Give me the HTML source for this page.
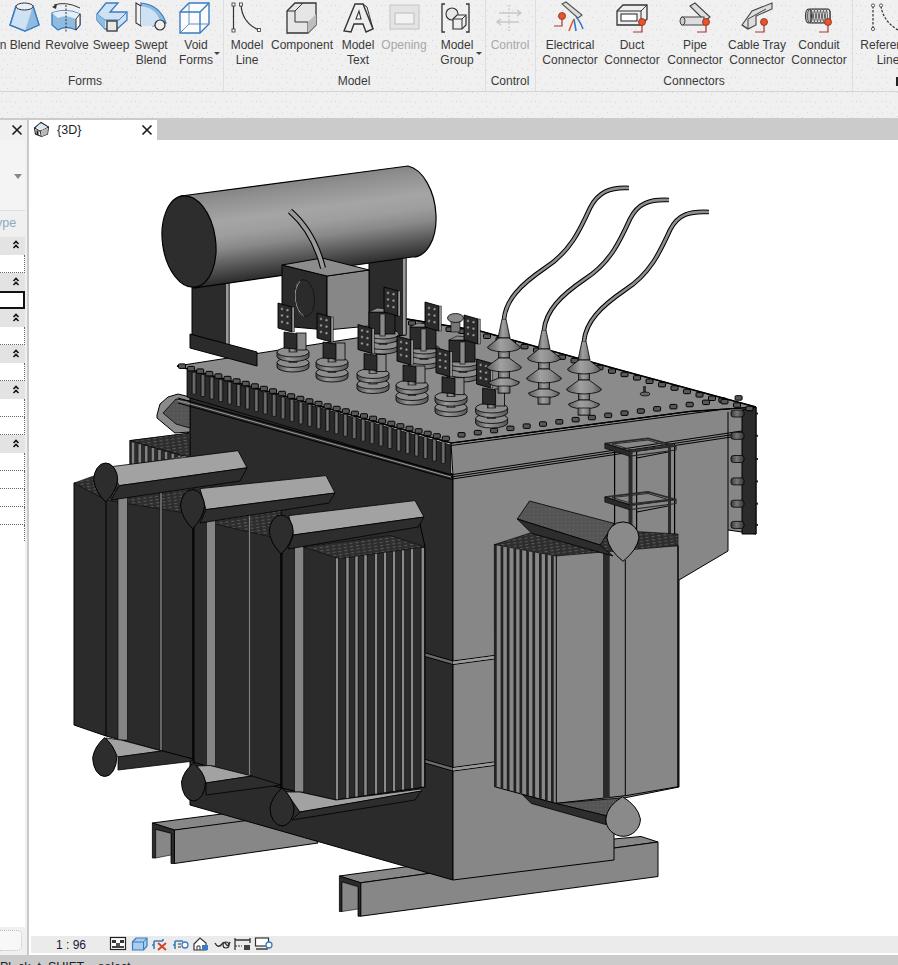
<!DOCTYPE html>
<html><head><meta charset="utf-8">
<style>
*{margin:0;padding:0;box-sizing:border-box}
html,body{width:898px;height:965px;overflow:hidden;background:#fff;font-family:"Liberation Sans",sans-serif}
.abs{position:absolute}
#ribbon{position:absolute;left:0;top:0;width:898px;height:118px;background:#f0f0f0}
.rl{position:absolute;font-size:12px;color:#3a3a3a;text-align:center;line-height:15px;white-space:nowrap;transform:translateX(-50%)}
.gr{color:#a8a8a8}
.sep{position:absolute;top:0;width:1px;height:91px;background:#dedede}
.pl{position:absolute;top:74px;font-size:12px;color:#3a3a3a;white-space:nowrap;transform:translateX(-50%);line-height:15px}
.hdr{position:absolute;left:0;width:25px;height:18px;background:#e3e3e3}
.row{position:absolute;left:0;width:25px;height:18px;background:#fff;border-right:1px dotted #666;border-bottom:1px dotted #666}
</style></head><body>
<div id="ribbon">
<svg class="abs" style="left:0;top:0" width="898" height="118"><defs><pattern id="rdots" width="25" height="24" patternUnits="userSpaceOnUse"><rect x="1" y="5" width="1" height="1" fill="#d6d6d6"/><rect x="6" y="5" width="1" height="1" fill="#d6d6d6"/><rect x="10" y="5" width="1" height="1" fill="#d6d6d6"/><rect x="15" y="6" width="1" height="1" fill="#d6d6d6"/><rect x="3" y="11" width="1" height="1" fill="#d6d6d6"/><rect x="12" y="10" width="1" height="1" fill="#d6d6d6"/><rect x="20" y="12" width="1" height="1" fill="#d6d6d6"/><rect x="7" y="16" width="1" height="1" fill="#d6d6d6"/><rect x="17" y="17" width="1" height="1" fill="#d6d6d6"/><rect x="2" y="21" width="1" height="1" fill="#d6d6d6"/><rect x="11" y="22" width="1" height="1" fill="#d6d6d6"/><rect x="22" y="20" width="1" height="1" fill="#d6d6d6"/></pattern></defs><rect width="898" height="118" fill="url(#rdots)"/></svg>
  <div class="abs" style="left:0;top:91px;width:898px;height:1px;background:#d4d4d4"></div>
  <div class="sep" style="left:223px"></div>
  <div class="sep" style="left:485px"></div>
  <div class="sep" style="left:535px"></div>
  <div class="sep" style="left:852px"></div>
  <div class="rl" style="left:3px;top:38px">n</div>
  <div class="rl" style="left:25px;top:38px">Blend</div>
  <div class="rl" style="left:67px;top:38px">Revolve</div>
  <div class="rl" style="left:111px;top:38px">Sweep</div>
  <div class="rl" style="left:151px;top:38px">Swept<br>Blend</div>
  <div class="rl" style="left:196px;top:38px">Void<br>Forms</div>
  <div class="rl" style="left:247px;top:38px">Model<br>Line</div>
  <div class="rl" style="left:302px;top:38px">Component</div>
  <div class="rl" style="left:358px;top:38px">Model<br>Text</div>
  <div class="rl gr" style="left:404px;top:38px">Opening</div>
  <div class="rl" style="left:457px;top:38px">Model<br>Group</div>
  <div class="rl gr" style="left:510px;top:38px">Control</div>
  <div class="rl" style="left:570px;top:38px">Electrical<br>Connector</div>
  <div class="rl" style="left:632px;top:38px">Duct<br>Connector</div>
  <div class="rl" style="left:695px;top:38px">Pipe<br>Connector</div>
  <div class="rl" style="left:757px;top:38px">Cable Tray<br>Connector</div>
  <div class="rl" style="left:819px;top:38px">Conduit<br>Connector</div>
  <div class="rl" style="left:888px;top:38px">Reference<br>Line</div>
  <div class="pl" style="left:85px">Forms</div>
  <div class="pl" style="left:354px">Model</div>
  <div class="pl" style="left:510px">Control</div>
  <div class="pl" style="left:694px">Connectors</div>
  <div class="abs" style="left:896px;top:77px;width:2px;height:9px;background:#222"></div>
  <svg class="abs" style="left:0;top:0" width="898" height="91"><g transform="translate(10,2)">
<path d="M6,4 L23,4 L29,23 L15,29 L0,23 Z" fill="#cfe2f3" stroke="#3a7cc2" stroke-width="1.3"/>
<path d="M15,29 L23,4 L29,23 Z" fill="#8fbbe0"/>
<path d="M6,4 L0,23 L15,29 L29,23 L23,4" fill="none" stroke="#3a7cc2" stroke-width="1.3"/>
<ellipse cx="14.5" cy="4.5" rx="8.5" ry="3.5" fill="#e8f0f7" stroke="#333" stroke-width="1"/></g>
<g transform="translate(52,3)">
<path d="M2,2 Q14,-2 28,5" fill="none" stroke="#333" stroke-width="1"/>
<path d="M0,4 L5,1 L4,6 Z" fill="#333"/>
<path d="M0,10 Q14,5 28,11 L28,22 L24,27 Q14,22 6,27 L0,22 Z" fill="#8fbbe0" stroke="#3a7cc2" stroke-width="1.3"/>
<path d="M0,10 Q14,5 28,11 L24,16 Q14,11 6,15 Z" fill="#e4eef7"/>
<path d="M24,16 L28,11 L28,22 L24,27 Z" fill="#fff" stroke="#333" stroke-width="1"/>
<line x1="14" y1="2" x2="14" y2="29" stroke="#333" stroke-width="1" stroke-dasharray="2,1.5"/></g>
<g transform="translate(97,2)">
<path d="M9,1 L21,1 L13,10 L30,10 L30,18 L20,27 L8,27 L0,18 L0,12 Z" fill="#cfe2f3" stroke="#3a7cc2" stroke-width="1.3"/>
<path d="M0,12 L8,18 L22,18 L30,10" fill="none" stroke="#3a7cc2" stroke-width="1"/>
<path d="M0,12 L8,18 L8,27 L0,18Z" fill="#8fbbe0"/>
<rect x="10" y="19" width="10" height="10" fill="#e8e8e8" stroke="#333" stroke-width="1.3"/></g>
<g transform="translate(136,3)">
<path d="M5,0 Q24,2 30,20 L17,23 Q15,10 5,8 Z" fill="#8fbbe0" stroke="#3a7cc2" stroke-width="1.2"/>
<path d="M0,0 L5,3 L5,23 L0,20 Z" fill="#f2f2f2" stroke="#333" stroke-width="1.1"/>
<path d="M5,3 Q20,5 24,18 L17,23 L5,23 Z" fill="#cfe2f3"/>
<circle cx="24" cy="22" r="5" fill="#eee" stroke="#333" stroke-width="1.2"/></g>
<g transform="translate(180,3)">
<path d="M0,9 L9,0 L29,0 L29,21 L20,30 L0,30 Z" fill="#fbfbfb" stroke="#3a7cc2" stroke-width="1.4"/>
<path d="M0,9 L20,9 L29,0 M20,9 L20,30" fill="none" stroke="#3a7cc2" stroke-width="1.4"/>
<path d="M9,0 L9,21 L0,30 M9,21 L29,21" fill="none" stroke="#3a7cc2" stroke-width="0.8"/></g>
<path d="M214,52 L220,52 L217,55 Z" fill="#444"/>
<g transform="translate(232,3)">
<line x1="1.5" y1="1.5" x2="1.5" y2="27" stroke="#333" stroke-width="1.2"/>
<path d="M9,1.5 Q10,20 27,27" fill="none" stroke="#333" stroke-width="1.2"/>
<rect x="0" y="0" width="3" height="3" fill="#fff" stroke="#333" stroke-width=".8"/>
<rect x="0" y="26" width="3" height="3" fill="#fff" stroke="#333" stroke-width=".8"/>
<rect x="7.5" y="0" width="3" height="3" fill="#fff" stroke="#333" stroke-width=".8"/>
<rect x="25.5" y="25.5" width="3" height="3" fill="#fff" stroke="#333" stroke-width=".8"/></g>
<g transform="translate(287,3)">
<path d="M0,8 L8,0 L29,0 L29,22 L21,30 L0,30 Z" fill="#e6e6e6" stroke="#333" stroke-width="1.3"/>
<path d="M0,8 L8,8 L8,19 L21,19 L21,30" fill="none" stroke="#333" stroke-width="1"/>
<path d="M21,19 L29,11 L29,22 L21,30 Z" fill="#bdbdbd"/>
<path d="M8,8 L16,0" stroke="#333" stroke-width="1"/></g>
<g transform="translate(344,3)">
<path d="M0,28 L11,1 L19,1 L29,26 L22,29 L19,21 L10,21 L7,29 Z" fill="#eee" stroke="#333" stroke-width="1.4"/>
<path d="M12,16 L15,8 L17,16 Z" fill="#fff" stroke="#333" stroke-width="1.1"/>
<path d="M19,1 L23,4 L29,26" fill="none" stroke="#333" stroke-width="1"/></g>
<g transform="translate(390,5)"><rect x="0" y="0" width="29" height="24" fill="#e4e4e4" stroke="#c4c4c4" stroke-width="1"/>
<rect x="5" y="8" width="19" height="11" fill="#f2f2f2" stroke="#c4c4c4" stroke-width="1.2"/></g>
<g transform="translate(441,3)">
<path d="M4,1 L1,1 L1,29 L4,29 M25,1 L28,1 L28,29 L25,29" fill="none" stroke="#333" stroke-width="1.3"/>
<circle cx="11" cy="11" r="6" fill="#e8e8e8" stroke="#333" stroke-width="1.1"/>
<path d="M12,16 L16,12 L25,12 L25,22 L21,26 L12,26 Z" fill="#eee" stroke="#333" stroke-width="1.2"/>
<path d="M12,16 L21,16 L25,12 M21,16 L21,26" fill="none" stroke="#333" stroke-width="1"/></g>
<path d="M476,52 L482,52 L479,55 Z" fill="#444"/>
<g transform="translate(495,4)"><line x1="14" y1="1" x2="14" y2="27" stroke="#bdbdbd" stroke-width="1" stroke-dasharray="2,1.5"/>
<path d="M4,9 L26,9 M22,6 L26,9 L22,12" fill="none" stroke="#c8c8c8" stroke-width="1.5"/>
<path d="M2,18 L24,18 M6,15 L2,18 L6,21" fill="none" stroke="#c8c8c8" stroke-width="1.5"/></g>
<g transform="translate(554,3)">
<path d="M8,1 L12,-1 L28,12 L24,15 Z" fill="#ddd" stroke="#555" stroke-width="1.1"/>
<path d="M22,14 Q26,18 29,26" fill="none" stroke="#3a7cc2" stroke-width="1.6"/>
<path d="M20,16 Q21,22 22,28" fill="none" stroke="#3a7cc2" stroke-width="1.6"/>
<path d="M20,16 Q17,22 15,28" fill="none" stroke="#e4572e" stroke-width="1.6"/>
<circle cx="8" cy="13" r="3.5" fill="#e4572e" stroke="#8a2a1a" stroke-width=".8"/>
<path d="M8,16 L8,23 L0,23" fill="none" stroke="#a83232" stroke-width="1.2"/></g>
<g transform="translate(617,3)">
<path d="M0,8 L6,2 L30,2 L30,16 L24,22 L0,22 Z" fill="#eee" stroke="#333" stroke-width="1.3"/>
<path d="M0,8 L24,8 L30,2 M24,8 L24,22" fill="none" stroke="#333" stroke-width="1"/>
<rect x="4" y="11" width="16" height="7" fill="#fff" stroke="#333" stroke-width="1.1"/>
<circle cx="25" cy="19" r="3.5" fill="#e4572e" stroke="#8a2a1a" stroke-width=".8"/>
<path d="M25,22 L25,29 L16,29" fill="none" stroke="#a83232" stroke-width="1.2"/></g>
<g transform="translate(680,3)">
<path d="M10,3 L15,0 L30,14 L25,18 Z" fill="#ddd" stroke="#444" stroke-width="1.1"/>
<path d="M2,14 L24,14 L24,22 L2,22 Z" fill="#ddd" stroke="#444" stroke-width="1.1"/>
<ellipse cx="2.5" cy="18" rx="2.5" ry="4" fill="#ccc" stroke="#444" stroke-width="1"/>
<circle cx="26" cy="19" r="3.5" fill="#e4572e" stroke="#8a2a1a" stroke-width=".8"/>
<path d="M26,22 L26,29 L17,29" fill="none" stroke="#a83232" stroke-width="1.2"/></g>
<g transform="translate(742,3)">
<path d="M0,22 L10,8 L30,0 L30,6 L14,13 L14,22 L6,26 Z" fill="#ddd" stroke="#444" stroke-width="1.1"/>
<path d="M0,22 L6,26 L6,16 L24,6" fill="none" stroke="#444" stroke-width="1"/>
<circle cx="22" cy="19" r="3.5" fill="#e4572e" stroke="#8a2a1a" stroke-width=".8"/>
<path d="M22,22 L22,29 L13,29" fill="none" stroke="#a83232" stroke-width="1.2"/></g>
<g transform="translate(804,3)">
<rect x="4" y="6" width="22" height="14" rx="3" fill="#e6e6e6" stroke="#333" stroke-width="1.2"/>
<ellipse cx="4.5" cy="13" rx="3" ry="7" fill="#bbb" stroke="#333" stroke-width="1.1"/>
<ellipse cx="6" cy="13" rx="2.5" ry="7" fill="none" stroke="#555" stroke-width="0.9"/><ellipse cx="9" cy="13" rx="2.5" ry="7" fill="none" stroke="#555" stroke-width="0.9"/><ellipse cx="12" cy="13" rx="2.5" ry="7" fill="none" stroke="#555" stroke-width="0.9"/><ellipse cx="15" cy="13" rx="2.5" ry="7" fill="none" stroke="#555" stroke-width="0.9"/><ellipse cx="18" cy="13" rx="2.5" ry="7" fill="none" stroke="#555" stroke-width="0.9"/><ellipse cx="21" cy="13" rx="2.5" ry="7" fill="none" stroke="#555" stroke-width="0.9"/><ellipse cx="24" cy="13" rx="2.5" ry="7" fill="none" stroke="#555" stroke-width="0.9"/>
<circle cx="24" cy="19" r="3.5" fill="#e4572e" stroke="#8a2a1a" stroke-width=".8"/>
<path d="M24,22 L24,29 L15,29" fill="none" stroke="#a83232" stroke-width="1.2"/></g>
<g transform="translate(870,3)">
<line x1="3" y1="3" x2="3" y2="26" stroke="#333" stroke-width="1.2" stroke-dasharray="2.5,1.5"/>
<path d="M11,3 Q13,18 28,27" fill="none" stroke="#333" stroke-width="1.2" stroke-dasharray="2.5,1.5"/>
<circle cx="3" cy="2.5" r="1.6" fill="#fff" stroke="#333" stroke-width=".8"/>
<circle cx="3" cy="26" r="1.6" fill="#fff" stroke="#333" stroke-width=".8"/>
<circle cx="11" cy="2.5" r="1.6" fill="#fff" stroke="#333" stroke-width=".8"/></g></svg>
</div>
<!-- tab bar -->
<div class="abs" style="left:0;top:118px;width:898px;height:22px;background:#cbcbcb"></div>
<div class="abs" style="left:0;top:120px;width:27px;height:835px;background:#f0f0f0"></div>
<div class="abs" style="left:27px;top:120px;width:2px;height:835px;background:#c9c9c9"></div>
<div class="abs" style="left:29px;top:120px;width:128px;height:20px;background:#fff"></div>
<div class="abs" style="left:57px;top:122px;font-size:12.5px;line-height:16px;color:#1e1e1e">{3D}</div>
<svg class="abs" style="left:0;top:118px" width="160" height="24">
 <path d="M12.5,7.5 L21.5,16.5 M21.5,7.5 L12.5,16.5" stroke="#1a1a1a" stroke-width="1.6"/>
 <path d="M142.5,7.5 L151.5,16.5 M151.5,7.5 L142.5,16.5" stroke="#1a1a1a" stroke-width="1.6"/>
 <g transform="translate(34,4)">
  <path d="M0.5,6 L7,0.5 L14.5,5 L13.5,12 L7.5,14.5 L1.5,12 Z" fill="#fff" stroke="#222" stroke-width="1.1"/>
  <path d="M0.5,6 L6,9 L14.5,5 M6,9 L7.5,14.5" fill="none" stroke="#222" stroke-width="1"/>
  <path d="M7,9 L13.5,6 L13.5,12 L7.5,14.5 Z" fill="#b9b9b9"/>
  <path d="M2.5,8 L4.5,9 L4.5,13.5 L2.5,12.5 Z" fill="#222"/>
  <path d="M6,1.5 L13.5,5 L8,8 L2,5.5 Z" fill="#d8e8f2"/>
 </g>
</svg>
<!-- left panel -->
<div class="abs" style="left:0;top:140px;width:25px;height:71px;background:#f4f4f4;border-bottom:1px solid #dedede"></div>
<svg class="abs" style="left:0;top:140px" width="27" height="100"><path d="M14,34 L22,34 L18,39 Z" fill="#888"/></svg>
<div class="abs" style="left:-4px;top:216px;font-size:12.5px;line-height:14px;color:#8ea9c2">ype</div>
<div class="hdr" style="top:237px"></div>
<div class="row" style="top:255px"></div>
<div class="hdr" style="top:273px"></div>
<div class="abs" style="left:0;top:291px;width:25px;height:18px;background:#fff;border:2px solid #111;border-left:none"></div>
<div class="hdr" style="top:309px"></div>
<div class="row" style="top:327px"></div>
<div class="hdr" style="top:345px"></div>
<div class="row" style="top:363px"></div>
<div class="hdr" style="top:381px"></div>
<div class="row" style="top:399px"></div>
<div class="row" style="top:417px"></div>
<div class="hdr" style="top:435px"></div>
<div class="row" style="top:453px"></div>
<div class="row" style="top:471px"></div>
<div class="row" style="top:489px"></div>
<div class="row" style="top:507px"></div>
<div class="row" style="top:525px"></div>
<div class="abs" style="left:0;top:542px;width:25px;height:385px;background:#fff"></div>
<svg class="abs" style="left:0;top:236px" width="27" height="220">
 <g fill="none" stroke="#111" stroke-width="1.6">
 <path d="M13.5,8 L16,5.5 L18.5,8 M13.5,12 L16,9.5 L18.5,12"/><path d="M13.5,45 L16,42.5 L18.5,45 M13.5,49 L16,46.5 L18.5,49"/><path d="M13.5,81 L16,78.5 L18.5,81 M13.5,85 L16,82.5 L18.5,85"/><path d="M13.5,117 L16,114.5 L18.5,117 M13.5,121 L16,118.5 L18.5,121"/><path d="M13.5,153 L16,150.5 L18.5,153 M13.5,157 L16,154.5 L18.5,157"/><path d="M13.5,207 L16,204.5 L18.5,207 M13.5,211 L16,208.5 L18.5,211"/>
 </g>
</svg>
<div class="abs" style="left:0;top:930px;width:22px;height:21px;border:1px dotted #bbb;border-left:none;border-radius:0 5px 5px 0;background:#f8f8f8"></div>
<!-- 3D view -->
<svg class="abs" style="left:29px;top:140px" width="869" height="796" viewBox="29 140 869 796"><defs>
<linearGradient id="cyl" gradientUnits="userSpaceOnUse" x1="29.8" y1="216.9" x2="42.3" y2="308.3">
<stop offset="0" stop-color="#858585"/><stop offset="0.12" stop-color="#929292"/><stop offset="0.33" stop-color="#a5a5a5"/><stop offset="0.48" stop-color="#9e9e9e"/><stop offset="0.63" stop-color="#898989"/><stop offset="0.78" stop-color="#626262"/><stop offset="0.9" stop-color="#444"/><stop offset="1" stop-color="#2c2c2c"/>
</linearGradient>
<linearGradient id="disc" x1="0" y1="0" x2="1" y2="0"><stop offset="0" stop-color="#4a4a4a"/><stop offset=".35" stop-color="#999"/><stop offset=".7" stop-color="#777"/><stop offset="1" stop-color="#555"/></linearGradient>
<linearGradient id="cone" x1="0" y1="0" x2="1" y2="0"><stop offset="0" stop-color="#5a5a5a"/><stop offset=".4" stop-color="#a0a0a0"/><stop offset=".75" stop-color="#888"/><stop offset="1" stop-color="#555"/></linearGradient>
<linearGradient id="fin" x1="0" y1="0" x2="1" y2="0"><stop offset="0" stop-color="#383838"/><stop offset=".45" stop-color="#777"/><stop offset="1" stop-color="#333"/></linearGradient>
<pattern id="dots" width="4" height="4" patternUnits="userSpaceOnUse"><rect width="4" height="4" fill="#555"/><rect x="1" y="1" width="1" height="1" fill="#6a6a6a"/></pattern>
<pattern id="mesh" width="6" height="3.2" patternUnits="userSpaceOnUse" patternTransform="rotate(-8)"><rect width="6" height="3.2" fill="#2d2d2d"/><rect x="0.5" y="1" width="3" height="0.8" fill="#6a6a6a"/></pattern>
</defs>
<polygon points="152.4,823.0 260.0,809.0 300.0,818.0 174.4,830.0" fill="#878787" stroke="#000" stroke-width="1" stroke-linejoin="round" />
<polygon points="174.4,830.0 300.0,813.5 318.0,843.0 174.4,863.5" fill="#878787" stroke="#000" stroke-width="1" stroke-linejoin="round" />
<polygon points="152.4,823.0 174.4,830.0 174.4,863.5 171.0,863.5 171.0,833.4 155.7,829.4 155.7,858.0 152.4,858.0" fill="#2b2b2b" stroke="#000" stroke-width="0.8" stroke-linejoin="round" />
<polygon points="155.7,829.4 171.0,833.4 171.0,855.0 155.7,858.0" fill="#878787" stroke="#000" stroke-width="0.6" stroke-linejoin="round" />
<polygon points="339.4,876.0 470.0,858.0 614.0,839.0 641.0,836.5 658.0,842.0 360.7,882.8" fill="#878787" stroke="#000" stroke-width="1" stroke-linejoin="round" />
<polygon points="360.7,882.8 658.0,842.0 658.0,876.5 360.7,916.2" fill="#878787" stroke="#000" stroke-width="1" stroke-linejoin="round" />
<polygon points="339.4,876.0 360.7,882.8 360.7,916.2 358.0,916.2 358.0,886.8 342.0,882.0 342.0,911.5 339.4,911.5" fill="#2b2b2b" stroke="#000" stroke-width="0.8" stroke-linejoin="round" />
<polygon points="342.0,882.0 358.0,886.8 358.0,909.0 342.0,911.5" fill="#878787" stroke="#000" stroke-width="0.6" stroke-linejoin="round" />
<polygon points="187.0,397.0 453.0,474.0 453.0,880.0 190.0,805.0 190.0,760.0" fill="#2b2b2b" stroke="#000" stroke-width="1" stroke-linejoin="round" />
<line x1="420.0" y1="651.5" x2="453.0" y2="661.0" stroke="#000" stroke-width="1"/>
<line x1="420.0" y1="655.0" x2="453.0" y2="664.5" stroke="#000" stroke-width="1"/>
<polygon points="420,652 453,661.5 453,664 420,654.5" fill="#6a6a6a"/>
<line x1="420.0" y1="758.0" x2="453.0" y2="767.5" stroke="#000" stroke-width="1"/>
<line x1="420.0" y1="761.5" x2="453.0" y2="771.0" stroke="#000" stroke-width="1"/>
<polygon points="420,758.5 453,768.0 453,770.5 420,761.0" fill="#6a6a6a"/>
<polygon points="129.8,440.6 190.0,433.0 190.0,455.0 129.8,465.0" fill="#2b2b2b" stroke="#000" stroke-width="0.8" stroke-linejoin="round" />
<rect x="131.5" y="442.1" width="3.2" height="22.6" fill="#808080" stroke="#111" stroke-width="0.5"/>
<rect x="138.1" y="443.9" width="3.2" height="19.7" fill="#808080" stroke="#111" stroke-width="0.5"/>
<rect x="144.7" y="445.8" width="3.2" height="16.8" fill="#808080" stroke="#111" stroke-width="0.5"/>
<rect x="151.3" y="447.7" width="3.2" height="13.9" fill="#808080" stroke="#111" stroke-width="0.5"/>
<rect x="157.9" y="449.6" width="3.2" height="11.0" fill="#808080" stroke="#111" stroke-width="0.5"/>
<rect x="164.5" y="451.4" width="3.2" height="8.0" fill="#808080" stroke="#111" stroke-width="0.5"/>
<rect x="171.1" y="453.3" width="3.2" height="5.1" fill="#808080" stroke="#111" stroke-width="0.5"/>
<rect x="177.7" y="455.2" width="3.2" height="2.2" fill="#808080" stroke="#111" stroke-width="0.5"/>
<polygon points="129.8,440.6 190.0,433.0 190.0,457.5" fill="url(#mesh)" stroke="#000" stroke-width="0.6" stroke-linejoin="round" />
<polygon points="157.0,415.0 160.0,404.0 168.0,397.0 178.0,394.0 190.0,397.0 190.0,432.0 175.0,433.0 157.0,418.0" fill="#8a8a8a" stroke="#000" stroke-width="1" stroke-linejoin="round" />
<polygon points="163.0,413.0 176.0,399.0 190.0,401.0 190.0,428.0 176.0,424.0" fill="url(#dots)" stroke="#000" stroke-width="0.8" stroke-linejoin="round" />
<polygon points="187.0,370.0 451.0,445.0 451.0,475.0 187.0,397.0" fill="#2b2b2b" stroke="#000" stroke-width="0.8" stroke-linejoin="round" />
<rect x="192.0" y="372.2" width="4.2" height="22" rx="1" fill="url(#fin)" stroke="#0a0a0a" stroke-width="0.7"/>
<rect x="200.9" y="374.6" width="4.2" height="22" rx="1" fill="url(#fin)" stroke="#0a0a0a" stroke-width="0.7"/>
<rect x="209.8" y="377.1" width="4.2" height="22" rx="1" fill="url(#fin)" stroke="#0a0a0a" stroke-width="0.7"/>
<rect x="218.7" y="379.6" width="4.2" height="22" rx="1" fill="url(#fin)" stroke="#0a0a0a" stroke-width="0.7"/>
<rect x="227.6" y="382.1" width="4.2" height="22" rx="1" fill="url(#fin)" stroke="#0a0a0a" stroke-width="0.7"/>
<rect x="236.5" y="384.5" width="4.2" height="22" rx="1" fill="url(#fin)" stroke="#0a0a0a" stroke-width="0.7"/>
<rect x="245.4" y="387.0" width="4.2" height="22" rx="1" fill="url(#fin)" stroke="#0a0a0a" stroke-width="0.7"/>
<rect x="254.3" y="389.5" width="4.2" height="22" rx="1" fill="url(#fin)" stroke="#0a0a0a" stroke-width="0.7"/>
<rect x="263.2" y="392.0" width="4.2" height="22" rx="1" fill="url(#fin)" stroke="#0a0a0a" stroke-width="0.7"/>
<rect x="272.1" y="394.4" width="4.2" height="22" rx="1" fill="url(#fin)" stroke="#0a0a0a" stroke-width="0.7"/>
<rect x="281.0" y="396.9" width="4.2" height="22" rx="1" fill="url(#fin)" stroke="#0a0a0a" stroke-width="0.7"/>
<rect x="289.9" y="399.4" width="4.2" height="22" rx="1" fill="url(#fin)" stroke="#0a0a0a" stroke-width="0.7"/>
<rect x="298.8" y="401.9" width="4.2" height="22" rx="1" fill="url(#fin)" stroke="#0a0a0a" stroke-width="0.7"/>
<rect x="307.7" y="404.3" width="4.2" height="22" rx="1" fill="url(#fin)" stroke="#0a0a0a" stroke-width="0.7"/>
<rect x="316.6" y="406.8" width="4.2" height="22" rx="1" fill="url(#fin)" stroke="#0a0a0a" stroke-width="0.7"/>
<rect x="325.5" y="409.3" width="4.2" height="22" rx="1" fill="url(#fin)" stroke="#0a0a0a" stroke-width="0.7"/>
<rect x="334.4" y="411.8" width="4.2" height="22" rx="1" fill="url(#fin)" stroke="#0a0a0a" stroke-width="0.7"/>
<rect x="343.3" y="414.2" width="4.2" height="22" rx="1" fill="url(#fin)" stroke="#0a0a0a" stroke-width="0.7"/>
<rect x="352.2" y="416.7" width="4.2" height="22" rx="1" fill="url(#fin)" stroke="#0a0a0a" stroke-width="0.7"/>
<rect x="361.1" y="419.2" width="4.2" height="22" rx="1" fill="url(#fin)" stroke="#0a0a0a" stroke-width="0.7"/>
<rect x="370.0" y="421.7" width="4.2" height="22" rx="1" fill="url(#fin)" stroke="#0a0a0a" stroke-width="0.7"/>
<rect x="378.9" y="424.1" width="4.2" height="22" rx="1" fill="url(#fin)" stroke="#0a0a0a" stroke-width="0.7"/>
<rect x="387.8" y="426.6" width="4.2" height="22" rx="1" fill="url(#fin)" stroke="#0a0a0a" stroke-width="0.7"/>
<rect x="396.7" y="429.1" width="4.2" height="22" rx="1" fill="url(#fin)" stroke="#0a0a0a" stroke-width="0.7"/>
<rect x="405.6" y="431.6" width="4.2" height="22" rx="1" fill="url(#fin)" stroke="#0a0a0a" stroke-width="0.7"/>
<rect x="414.5" y="434.0" width="4.2" height="22" rx="1" fill="url(#fin)" stroke="#0a0a0a" stroke-width="0.7"/>
<rect x="423.4" y="436.5" width="4.2" height="22" rx="1" fill="url(#fin)" stroke="#0a0a0a" stroke-width="0.7"/>
<rect x="432.3" y="439.0" width="4.2" height="22" rx="1" fill="url(#fin)" stroke="#0a0a0a" stroke-width="0.7"/>
<rect x="441.2" y="441.4" width="4.2" height="22" rx="1" fill="url(#fin)" stroke="#0a0a0a" stroke-width="0.7"/>
<line x1="178.0" y1="398.0" x2="451.0" y2="474.8" stroke="#000" stroke-width="1.2"/>
<line x1="178.0" y1="400.5" x2="451.0" y2="477.0" stroke="#9a9a9a" stroke-width="1"/>
<line x1="178.0" y1="403.0" x2="451.0" y2="479.2" stroke="#000" stroke-width="1"/>
<polygon points="451.0,443.0 690.0,411.4 756.0,407.0 756.0,534.0 728.0,530.0 728.0,551.0 679.0,580.0 679.0,787.0 614.0,800.0 614.0,860.0 453.0,880.0 453.0,476.0" fill="#878787" stroke="#000" stroke-width="1" stroke-linejoin="round" />
<line x1="451.0" y1="445.5" x2="742.0" y2="406.8" stroke="#000" stroke-width="1"/>
<line x1="451.0" y1="474.8" x2="742.0" y2="431.0" stroke="#000" stroke-width="1"/>
<line x1="451.0" y1="477.0" x2="742.0" y2="433.2" stroke="#000" stroke-width="1"/>
<line x1="451.0" y1="479.2" x2="742.0" y2="435.4" stroke="#000" stroke-width="1"/>
<line x1="453.0" y1="661.0" x2="494.0" y2="655.5" stroke="#000" stroke-width="1"/>
<line x1="453.0" y1="664.5" x2="494.0" y2="659.0" stroke="#000" stroke-width="1"/>
<polygon points="453,661.5 494,656 494,658.5 453,664" fill="#9a9a9a"/>
<line x1="453.0" y1="767.5" x2="494.0" y2="762.0" stroke="#000" stroke-width="1"/>
<line x1="453.0" y1="771.0" x2="494.0" y2="765.5" stroke="#000" stroke-width="1"/>
<polygon points="453,768.0 494,762.5 494,765.0 453,770.5" fill="#9a9a9a"/>
<line x1="728.0" y1="412.0" x2="728.0" y2="530.0" stroke="#000" stroke-width="1"/>
<polygon points="742.0,410.0 756.0,407.0 756.0,534.0 742.0,534.0" fill="#2b2b2b" stroke="#000" stroke-width="1" stroke-linejoin="round" />
<rect x="731" y="410.0" width="13" height="7" rx="2.5" fill="url(#fin)" stroke="#000" stroke-width="0.8"/>
<rect x="756" y="412.5" width="2" height="2" fill="#222"/>
<rect x="731" y="432.3" width="13" height="7" rx="2.5" fill="url(#fin)" stroke="#000" stroke-width="0.8"/>
<rect x="756" y="434.8" width="2" height="2" fill="#222"/>
<rect x="731" y="455.5" width="13" height="7" rx="2.5" fill="url(#fin)" stroke="#000" stroke-width="0.8"/>
<rect x="756" y="458" width="2" height="2" fill="#222"/>
<rect x="731" y="477.9" width="13" height="7" rx="2.5" fill="url(#fin)" stroke="#000" stroke-width="0.8"/>
<rect x="756" y="480.4" width="2" height="2" fill="#222"/>
<rect x="731" y="500.2" width="13" height="7" rx="2.5" fill="url(#fin)" stroke="#000" stroke-width="0.8"/>
<rect x="756" y="502.7" width="2" height="2" fill="#222"/>
<rect x="731" y="521.4" width="13" height="7" rx="2.5" fill="url(#fin)" stroke="#000" stroke-width="0.8"/>
<rect x="756" y="523.9" width="2" height="2" fill="#222"/>
<polygon points="177.0,366.0 369.0,336.0 407.0,319.0 480.0,331.0 620.0,370.0 756.0,407.0 690.0,411.4 451.0,443.0" fill="#8b8b8b" stroke="#000" stroke-width="1" stroke-linejoin="round" />
<line x1="177.0" y1="366.0" x2="451.0" y2="443.0" stroke="#000" stroke-width="1.6"/>
<line x1="451.0" y1="443.0" x2="690.0" y2="411.4" stroke="#000" stroke-width="1.2"/>
<line x1="690.0" y1="411.4" x2="756.0" y2="407.0" stroke="#000" stroke-width="1.2"/>
<rect x="178.5" y="363.9" width="7" height="4.5" rx="1" fill="#585858" stroke="#000" stroke-width="1"/>
<rect x="187.6" y="366.4" width="7" height="4.5" rx="1" fill="#585858" stroke="#000" stroke-width="1"/>
<rect x="196.7" y="368.9" width="7" height="4.5" rx="1" fill="#585858" stroke="#000" stroke-width="1"/>
<rect x="205.8" y="371.4" width="7" height="4.5" rx="1" fill="#585858" stroke="#000" stroke-width="1"/>
<rect x="214.9" y="373.8" width="7" height="4.5" rx="1" fill="#585858" stroke="#000" stroke-width="1"/>
<rect x="224.0" y="376.3" width="7" height="4.5" rx="1" fill="#585858" stroke="#000" stroke-width="1"/>
<rect x="233.1" y="378.8" width="7" height="4.5" rx="1" fill="#585858" stroke="#000" stroke-width="1"/>
<rect x="242.2" y="381.3" width="7" height="4.5" rx="1" fill="#585858" stroke="#000" stroke-width="1"/>
<rect x="251.3" y="383.8" width="7" height="4.5" rx="1" fill="#585858" stroke="#000" stroke-width="1"/>
<rect x="260.4" y="386.3" width="7" height="4.5" rx="1" fill="#585858" stroke="#000" stroke-width="1"/>
<rect x="269.5" y="388.8" width="7" height="4.5" rx="1" fill="#585858" stroke="#000" stroke-width="1"/>
<rect x="278.6" y="391.3" width="7" height="4.5" rx="1" fill="#585858" stroke="#000" stroke-width="1"/>
<rect x="287.7" y="393.8" width="7" height="4.5" rx="1" fill="#585858" stroke="#000" stroke-width="1"/>
<rect x="296.8" y="396.3" width="7" height="4.5" rx="1" fill="#585858" stroke="#000" stroke-width="1"/>
<rect x="305.9" y="398.8" width="7" height="4.5" rx="1" fill="#585858" stroke="#000" stroke-width="1"/>
<rect x="315.0" y="401.3" width="7" height="4.5" rx="1" fill="#585858" stroke="#000" stroke-width="1"/>
<rect x="324.1" y="403.8" width="7" height="4.5" rx="1" fill="#585858" stroke="#000" stroke-width="1"/>
<rect x="333.2" y="406.3" width="7" height="4.5" rx="1" fill="#585858" stroke="#000" stroke-width="1"/>
<rect x="342.3" y="408.8" width="7" height="4.5" rx="1" fill="#585858" stroke="#000" stroke-width="1"/>
<rect x="351.4" y="411.2" width="7" height="4.5" rx="1" fill="#585858" stroke="#000" stroke-width="1"/>
<rect x="360.5" y="413.7" width="7" height="4.5" rx="1" fill="#585858" stroke="#000" stroke-width="1"/>
<rect x="369.6" y="416.2" width="7" height="4.5" rx="1" fill="#585858" stroke="#000" stroke-width="1"/>
<rect x="378.7" y="418.7" width="7" height="4.5" rx="1" fill="#585858" stroke="#000" stroke-width="1"/>
<rect x="387.8" y="421.2" width="7" height="4.5" rx="1" fill="#585858" stroke="#000" stroke-width="1"/>
<rect x="396.9" y="423.7" width="7" height="4.5" rx="1" fill="#585858" stroke="#000" stroke-width="1"/>
<rect x="406.0" y="426.2" width="7" height="4.5" rx="1" fill="#585858" stroke="#000" stroke-width="1"/>
<rect x="415.1" y="428.7" width="7" height="4.5" rx="1" fill="#585858" stroke="#000" stroke-width="1"/>
<rect x="424.2" y="431.2" width="7" height="4.5" rx="1" fill="#585858" stroke="#000" stroke-width="1"/>
<rect x="433.3" y="433.7" width="7" height="4.5" rx="1" fill="#585858" stroke="#000" stroke-width="1"/>
<rect x="442.4" y="436.2" width="7" height="4.5" rx="1" fill="#585858" stroke="#000" stroke-width="1"/>
<rect x="458.0" y="432.6" width="7" height="4.5" rx="1" fill="#585858" stroke="#000" stroke-width="1"/>
<rect x="474.3" y="430.4" width="7" height="4.5" rx="1" fill="#585858" stroke="#000" stroke-width="1"/>
<rect x="490.6" y="428.3" width="7" height="4.5" rx="1" fill="#585858" stroke="#000" stroke-width="1"/>
<rect x="506.9" y="426.1" width="7" height="4.5" rx="1" fill="#585858" stroke="#000" stroke-width="1"/>
<rect x="523.2" y="423.9" width="7" height="4.5" rx="1" fill="#585858" stroke="#000" stroke-width="1"/>
<rect x="539.5" y="421.8" width="7" height="4.5" rx="1" fill="#585858" stroke="#000" stroke-width="1"/>
<rect x="555.8" y="419.6" width="7" height="4.5" rx="1" fill="#585858" stroke="#000" stroke-width="1"/>
<rect x="572.1" y="417.4" width="7" height="4.5" rx="1" fill="#585858" stroke="#000" stroke-width="1"/>
<rect x="588.4" y="415.3" width="7" height="4.5" rx="1" fill="#585858" stroke="#000" stroke-width="1"/>
<rect x="604.7" y="413.1" width="7" height="4.5" rx="1" fill="#585858" stroke="#000" stroke-width="1"/>
<rect x="621.0" y="410.9" width="7" height="4.5" rx="1" fill="#585858" stroke="#000" stroke-width="1"/>
<rect x="637.3" y="408.8" width="7" height="4.5" rx="1" fill="#585858" stroke="#000" stroke-width="1"/>
<rect x="653.6" y="406.6" width="7" height="4.5" rx="1" fill="#585858" stroke="#000" stroke-width="1"/>
<rect x="669.9" y="404.4" width="7" height="4.5" rx="1" fill="#585858" stroke="#000" stroke-width="1"/>
<rect x="686.2" y="402.3" width="7" height="4.5" rx="1" fill="#585858" stroke="#000" stroke-width="1"/>
<rect x="702.5" y="400.1" width="7" height="4.5" rx="1" fill="#585858" stroke="#000" stroke-width="1"/>
<rect x="718.8" y="397.9" width="7" height="4.5" rx="1" fill="#585858" stroke="#000" stroke-width="1"/>
<rect x="735.1" y="395.7" width="7" height="4.5" rx="1" fill="#585858" stroke="#000" stroke-width="1"/>
<rect x="408.5" y="320.8" width="7" height="4.5" rx="1" fill="#585858" stroke="#000" stroke-width="1"/>
<rect x="421.0" y="322.9" width="7" height="4.5" rx="1" fill="#585858" stroke="#000" stroke-width="1"/>
<rect x="433.5" y="324.9" width="7" height="4.5" rx="1" fill="#585858" stroke="#000" stroke-width="1"/>
<rect x="446.0" y="327.0" width="7" height="4.5" rx="1" fill="#585858" stroke="#000" stroke-width="1"/>
<rect x="458.5" y="329.0" width="7" height="4.5" rx="1" fill="#585858" stroke="#000" stroke-width="1"/>
<rect x="471.0" y="331.1" width="7" height="4.5" rx="1" fill="#585858" stroke="#000" stroke-width="1"/>
<rect x="483.5" y="334.0" width="7" height="4.5" rx="1" fill="#585858" stroke="#000" stroke-width="1"/>
<rect x="496.0" y="337.4" width="7" height="4.5" rx="1" fill="#585858" stroke="#000" stroke-width="1"/>
<rect x="508.5" y="340.9" width="7" height="4.5" rx="1" fill="#585858" stroke="#000" stroke-width="1"/>
<rect x="521.0" y="344.4" width="7" height="4.5" rx="1" fill="#585858" stroke="#000" stroke-width="1"/>
<rect x="533.5" y="347.9" width="7" height="4.5" rx="1" fill="#585858" stroke="#000" stroke-width="1"/>
<rect x="546.0" y="351.4" width="7" height="4.5" rx="1" fill="#585858" stroke="#000" stroke-width="1"/>
<rect x="558.5" y="354.9" width="7" height="4.5" rx="1" fill="#585858" stroke="#000" stroke-width="1"/>
<rect x="571.0" y="358.4" width="7" height="4.5" rx="1" fill="#585858" stroke="#000" stroke-width="1"/>
<rect x="583.5" y="361.9" width="7" height="4.5" rx="1" fill="#585858" stroke="#000" stroke-width="1"/>
<rect x="596.0" y="365.3" width="7" height="4.5" rx="1" fill="#585858" stroke="#000" stroke-width="1"/>
<rect x="608.5" y="368.8" width="7" height="4.5" rx="1" fill="#585858" stroke="#000" stroke-width="1"/>
<rect x="621.0" y="372.2" width="7" height="4.5" rx="1" fill="#585858" stroke="#000" stroke-width="1"/>
<rect x="633.5" y="375.6" width="7" height="4.5" rx="1" fill="#585858" stroke="#000" stroke-width="1"/>
<rect x="646.0" y="379.0" width="7" height="4.5" rx="1" fill="#585858" stroke="#000" stroke-width="1"/>
<rect x="658.5" y="382.4" width="7" height="4.5" rx="1" fill="#585858" stroke="#000" stroke-width="1"/>
<rect x="671.0" y="385.8" width="7" height="4.5" rx="1" fill="#585858" stroke="#000" stroke-width="1"/>
<rect x="683.5" y="389.2" width="7" height="4.5" rx="1" fill="#585858" stroke="#000" stroke-width="1"/>
<rect x="696.0" y="392.6" width="7" height="4.5" rx="1" fill="#585858" stroke="#000" stroke-width="1"/>
<rect x="708.5" y="396.0" width="7" height="4.5" rx="1" fill="#585858" stroke="#000" stroke-width="1"/>
<rect x="721.0" y="399.4" width="7" height="4.5" rx="1" fill="#585858" stroke="#000" stroke-width="1"/>
<rect x="733.5" y="402.8" width="7" height="4.5" rx="1" fill="#585858" stroke="#000" stroke-width="1"/>
<rect x="746.0" y="406.2" width="7" height="4.5" rx="1" fill="#585858" stroke="#000" stroke-width="1"/>
<line x1="407.0" y1="319.0" x2="480.0" y2="331.0" stroke="#000" stroke-width="1.5"/>
<line x1="480.0" y1="331.0" x2="620.0" y2="370.0" stroke="#000" stroke-width="1.5"/>
<line x1="620.0" y1="370.0" x2="756.0" y2="407.0" stroke="#000" stroke-width="1.5"/>
<rect x="643" y="386" width="3" height="8" fill="#333"/><ellipse cx="645" cy="394" rx="5" ry="2" fill="#666" stroke="#000" stroke-width=".7"/>
<polygon points="192.0,280.0 229.0,274.0 229.0,345.0 192.0,338.0" fill="#2b2b2b" stroke="#000" stroke-width="1" stroke-linejoin="round" />
<rect x="225.5" y="276" width="3.5" height="70" fill="#9a9a9a" stroke="#000" stroke-width=".6"/>
<polygon points="190.0,334.0 257.0,352.0 257.0,366.0 190.0,348.0" fill="#2b2b2b" stroke="#000" stroke-width="1" stroke-linejoin="round" />
<polygon points="369.0,256.0 406.0,251.0 406.0,335.0 369.0,338.0" fill="#2b2b2b" stroke="#000" stroke-width="1" stroke-linejoin="round" />
<rect x="402.5" y="253" width="3.5" height="82" fill="#9a9a9a" stroke="#000" stroke-width=".6"/>
<path d="M181,196 L408,166 A27,46 -8 0 1 412,257 L194,288 Z" fill="url(#cyl)" stroke="#000" stroke-width="1.2"/>
<ellipse cx="189" cy="241.5" rx="26.5" ry="46" transform="rotate(-8 189 241.5)" fill="#2d2d2d" stroke="#000" stroke-width="1.2"/>
<polygon points="282.0,265.0 327.0,276.0 327.0,330.0 282.0,326.0" fill="#2b2b2b" stroke="#000" stroke-width="1" stroke-linejoin="round" />
<polygon points="327.0,276.0 369.0,270.0 369.0,326.0 327.0,330.0" fill="#878787" stroke="#000" stroke-width="1" stroke-linejoin="round" />
<polygon points="282.0,265.0 322.0,258.0 369.0,270.0 327.0,276.0" fill="#8c8c8c" stroke="#000" stroke-width="1" stroke-linejoin="round" />
<path d="M300,281 A10,18.5 -5 0 0 304,316" fill="none" stroke="#bbb" stroke-width="1.2"/>
<ellipse cx="304.5" cy="298" rx="10" ry="18.5" transform="rotate(-5 304.5 298)" fill="none" stroke="#111" stroke-width="0.8"/>
<path d="M290,211 Q314,232 323,268" fill="none" stroke="#000" stroke-width="6" stroke-linecap="butt"/>
<path d="M290,211 Q314,232 323,268" fill="none" stroke="#9a9a9a" stroke-width="3.8"/>
<path d="M367,344.5 L367,349.0 A16,5 0 0 0 399,349.0 L399,344.5 Z" fill="url(#disc)" stroke="#000" stroke-width="0.8"/>
<ellipse cx="383" cy="344.5" rx="16" ry="5" fill="#8d8d8d" stroke="#000" stroke-width="0.8"/>
<rect x="379" y="339.5" width="8" height="5" fill="url(#disc)" stroke="#000" stroke-width="0.6"/>
<path d="M367,334 L367,338.5 A16,5 0 0 0 399,338.5 L399,334 Z" fill="url(#disc)" stroke="#000" stroke-width="0.8"/>
<ellipse cx="383" cy="334" rx="16" ry="5" fill="#8d8d8d" stroke="#000" stroke-width="0.8"/>
<rect x="379" y="329" width="8" height="5" fill="url(#disc)" stroke="#000" stroke-width="0.6"/>
<rect x="369" y="312" width="26" height="22" fill="#2b2b2b" stroke="#000" stroke-width="0.8"/>
<rect x="380" y="314" width="5" height="22" fill="#888" stroke="#000" stroke-width="0.6"/>
<polygon points="369.0,312.0 377.0,308.0 397.0,310.0 395.0,312.0" fill="#8a8a8a" stroke="#000" stroke-width="0.6" stroke-linejoin="round" />
<polygon points="384.0,287.0 398.0,291.0 398.0,316.0 384.0,312.0" fill="#2b2b2b" stroke="#000" stroke-width="0.9" stroke-linejoin="round" />
<rect x="398" y="291" width="2.2" height="25" fill="#9a9a9a" stroke="#000" stroke-width=".5"/>
<circle cx="388.0" cy="293.0" r="1.4" fill="#9a9a9a" stroke="#000" stroke-width=".3"/>
<circle cx="393.5" cy="294.2" r="1.4" fill="#9a9a9a" stroke="#000" stroke-width=".3"/>
<circle cx="388.0" cy="299.5" r="1.4" fill="#9a9a9a" stroke="#000" stroke-width=".3"/>
<circle cx="393.5" cy="300.7" r="1.4" fill="#9a9a9a" stroke="#000" stroke-width=".3"/>
<circle cx="388.0" cy="306.0" r="1.4" fill="#9a9a9a" stroke="#000" stroke-width=".3"/>
<circle cx="393.5" cy="307.2" r="1.4" fill="#9a9a9a" stroke="#000" stroke-width=".3"/>
<path d="M408,359.5 L408,364.0 A16,5 0 0 0 440,364.0 L440,359.5 Z" fill="url(#disc)" stroke="#000" stroke-width="0.8"/>
<ellipse cx="424" cy="359.5" rx="16" ry="5" fill="#8d8d8d" stroke="#000" stroke-width="0.8"/>
<rect x="420" y="354.5" width="8" height="5" fill="url(#disc)" stroke="#000" stroke-width="0.6"/>
<path d="M408,349 L408,353.5 A16,5 0 0 0 440,353.5 L440,349 Z" fill="url(#disc)" stroke="#000" stroke-width="0.8"/>
<ellipse cx="424" cy="349" rx="16" ry="5" fill="#8d8d8d" stroke="#000" stroke-width="0.8"/>
<rect x="420" y="344" width="8" height="5" fill="url(#disc)" stroke="#000" stroke-width="0.6"/>
<rect x="410" y="327" width="26" height="22" fill="#2b2b2b" stroke="#000" stroke-width="0.8"/>
<rect x="421" y="329" width="5" height="22" fill="#888" stroke="#000" stroke-width="0.6"/>
<polygon points="410.0,327.0 418.0,323.0 438.0,325.0 436.0,327.0" fill="#8a8a8a" stroke="#000" stroke-width="0.6" stroke-linejoin="round" />
<polygon points="425.0,302.0 439.0,306.0 439.0,331.0 425.0,327.0" fill="#2b2b2b" stroke="#000" stroke-width="0.9" stroke-linejoin="round" />
<rect x="439" y="306" width="2.2" height="25" fill="#9a9a9a" stroke="#000" stroke-width=".5"/>
<circle cx="429.0" cy="308.0" r="1.4" fill="#9a9a9a" stroke="#000" stroke-width=".3"/>
<circle cx="434.5" cy="309.2" r="1.4" fill="#9a9a9a" stroke="#000" stroke-width=".3"/>
<circle cx="429.0" cy="314.5" r="1.4" fill="#9a9a9a" stroke="#000" stroke-width=".3"/>
<circle cx="434.5" cy="315.7" r="1.4" fill="#9a9a9a" stroke="#000" stroke-width=".3"/>
<circle cx="429.0" cy="321.0" r="1.4" fill="#9a9a9a" stroke="#000" stroke-width=".3"/>
<circle cx="434.5" cy="322.2" r="1.4" fill="#9a9a9a" stroke="#000" stroke-width=".3"/>
<path d="M447,372.5 L447,377.0 A16,5 0 0 0 479,377.0 L479,372.5 Z" fill="url(#disc)" stroke="#000" stroke-width="0.8"/>
<ellipse cx="463" cy="372.5" rx="16" ry="5" fill="#8d8d8d" stroke="#000" stroke-width="0.8"/>
<rect x="459" y="367.5" width="8" height="5" fill="url(#disc)" stroke="#000" stroke-width="0.6"/>
<path d="M447,362 L447,366.5 A16,5 0 0 0 479,366.5 L479,362 Z" fill="url(#disc)" stroke="#000" stroke-width="0.8"/>
<ellipse cx="463" cy="362" rx="16" ry="5" fill="#8d8d8d" stroke="#000" stroke-width="0.8"/>
<rect x="459" y="357" width="8" height="5" fill="url(#disc)" stroke="#000" stroke-width="0.6"/>
<rect x="449" y="340" width="26" height="22" fill="#2b2b2b" stroke="#000" stroke-width="0.8"/>
<rect x="460" y="342" width="5" height="22" fill="#888" stroke="#000" stroke-width="0.6"/>
<polygon points="449.0,340.0 457.0,336.0 477.0,338.0 475.0,340.0" fill="#8a8a8a" stroke="#000" stroke-width="0.6" stroke-linejoin="round" />
<polygon points="464.0,315.0 478.0,319.0 478.0,344.0 464.0,340.0" fill="#2b2b2b" stroke="#000" stroke-width="0.9" stroke-linejoin="round" />
<rect x="478" y="319" width="2.2" height="25" fill="#9a9a9a" stroke="#000" stroke-width=".5"/>
<circle cx="468.0" cy="321.0" r="1.4" fill="#9a9a9a" stroke="#000" stroke-width=".3"/>
<circle cx="473.5" cy="322.2" r="1.4" fill="#9a9a9a" stroke="#000" stroke-width=".3"/>
<circle cx="468.0" cy="327.5" r="1.4" fill="#9a9a9a" stroke="#000" stroke-width=".3"/>
<circle cx="473.5" cy="328.7" r="1.4" fill="#9a9a9a" stroke="#000" stroke-width=".3"/>
<circle cx="468.0" cy="334.0" r="1.4" fill="#9a9a9a" stroke="#000" stroke-width=".3"/>
<circle cx="473.5" cy="335.2" r="1.4" fill="#9a9a9a" stroke="#000" stroke-width=".3"/>
<rect x="451" y="318" width="9" height="14" fill="#777" stroke="#000" stroke-width=".6"/><ellipse cx="455.5" cy="318" rx="8" ry="4.5" fill="#8a8a8a" stroke="#000" stroke-width=".8"/>
<path d="M277,362.5 L277,367.0 A16,5 0 0 0 309,367.0 L309,362.5 Z" fill="url(#disc)" stroke="#000" stroke-width="0.8"/>
<ellipse cx="293" cy="362.5" rx="16" ry="5" fill="#8d8d8d" stroke="#000" stroke-width="0.8"/>
<rect x="289" y="357.5" width="8" height="5" fill="url(#disc)" stroke="#000" stroke-width="0.6"/>
<path d="M277,352 L277,356.5 A16,5 0 0 0 309,356.5 L309,352 Z" fill="url(#disc)" stroke="#000" stroke-width="0.8"/>
<ellipse cx="293" cy="352" rx="16" ry="5" fill="#8d8d8d" stroke="#000" stroke-width="0.8"/>
<rect x="289" y="347" width="8" height="5" fill="url(#disc)" stroke="#000" stroke-width="0.6"/>
<rect x="296" y="333" width="10" height="17" fill="#8a8a8a" stroke="#000" stroke-width="0.8"/>
<polygon points="284.0,332.0 297.0,334.0 297.0,349.0 284.0,348.0" fill="#2b2b2b" stroke="#000" stroke-width="0.8" stroke-linejoin="round" />
<polygon points="278.0,303.0 292.0,307.0 292.0,332.0 278.0,328.0" fill="#2b2b2b" stroke="#000" stroke-width="0.9" stroke-linejoin="round" />
<rect x="292" y="307" width="2.2" height="25" fill="#9a9a9a" stroke="#000" stroke-width=".5"/>
<circle cx="282.0" cy="309.0" r="1.4" fill="#9a9a9a" stroke="#000" stroke-width=".3"/>
<circle cx="287.5" cy="310.2" r="1.4" fill="#9a9a9a" stroke="#000" stroke-width=".3"/>
<circle cx="282.0" cy="315.5" r="1.4" fill="#9a9a9a" stroke="#000" stroke-width=".3"/>
<circle cx="287.5" cy="316.7" r="1.4" fill="#9a9a9a" stroke="#000" stroke-width=".3"/>
<circle cx="282.0" cy="322.0" r="1.4" fill="#9a9a9a" stroke="#000" stroke-width=".3"/>
<circle cx="287.5" cy="323.2" r="1.4" fill="#9a9a9a" stroke="#000" stroke-width=".3"/>
<path d="M316,372.5 L316,377.0 A16,5 0 0 0 348,377.0 L348,372.5 Z" fill="url(#disc)" stroke="#000" stroke-width="0.8"/>
<ellipse cx="332" cy="372.5" rx="16" ry="5" fill="#8d8d8d" stroke="#000" stroke-width="0.8"/>
<rect x="328" y="367.5" width="8" height="5" fill="url(#disc)" stroke="#000" stroke-width="0.6"/>
<path d="M316,362 L316,366.5 A16,5 0 0 0 348,366.5 L348,362 Z" fill="url(#disc)" stroke="#000" stroke-width="0.8"/>
<ellipse cx="332" cy="362" rx="16" ry="5" fill="#8d8d8d" stroke="#000" stroke-width="0.8"/>
<rect x="328" y="357" width="8" height="5" fill="url(#disc)" stroke="#000" stroke-width="0.6"/>
<rect x="335" y="343" width="10" height="17" fill="#8a8a8a" stroke="#000" stroke-width="0.8"/>
<polygon points="323.0,342.0 336.0,344.0 336.0,359.0 323.0,358.0" fill="#2b2b2b" stroke="#000" stroke-width="0.8" stroke-linejoin="round" />
<polygon points="317.0,313.0 331.0,317.0 331.0,342.0 317.0,338.0" fill="#2b2b2b" stroke="#000" stroke-width="0.9" stroke-linejoin="round" />
<rect x="331" y="317" width="2.2" height="25" fill="#9a9a9a" stroke="#000" stroke-width=".5"/>
<circle cx="321.0" cy="319.0" r="1.4" fill="#9a9a9a" stroke="#000" stroke-width=".3"/>
<circle cx="326.5" cy="320.2" r="1.4" fill="#9a9a9a" stroke="#000" stroke-width=".3"/>
<circle cx="321.0" cy="325.5" r="1.4" fill="#9a9a9a" stroke="#000" stroke-width=".3"/>
<circle cx="326.5" cy="326.7" r="1.4" fill="#9a9a9a" stroke="#000" stroke-width=".3"/>
<circle cx="321.0" cy="332.0" r="1.4" fill="#9a9a9a" stroke="#000" stroke-width=".3"/>
<circle cx="326.5" cy="333.2" r="1.4" fill="#9a9a9a" stroke="#000" stroke-width=".3"/>
<path d="M357,384.0 L357,388.5 A16,5 0 0 0 389,388.5 L389,384.0 Z" fill="url(#disc)" stroke="#000" stroke-width="0.8"/>
<ellipse cx="373" cy="384.0" rx="16" ry="5" fill="#8d8d8d" stroke="#000" stroke-width="0.8"/>
<rect x="369" y="379.0" width="8" height="5" fill="url(#disc)" stroke="#000" stroke-width="0.6"/>
<path d="M357,373.5 L357,378.0 A16,5 0 0 0 389,378.0 L389,373.5 Z" fill="url(#disc)" stroke="#000" stroke-width="0.8"/>
<ellipse cx="373" cy="373.5" rx="16" ry="5" fill="#8d8d8d" stroke="#000" stroke-width="0.8"/>
<rect x="369" y="368.5" width="8" height="5" fill="url(#disc)" stroke="#000" stroke-width="0.6"/>
<rect x="376" y="354.5" width="10" height="17" fill="#8a8a8a" stroke="#000" stroke-width="0.8"/>
<polygon points="364.0,353.5 377.0,355.5 377.0,370.5 364.0,369.5" fill="#2b2b2b" stroke="#000" stroke-width="0.8" stroke-linejoin="round" />
<polygon points="358.0,324.5 372.0,328.5 372.0,353.5 358.0,349.5" fill="#2b2b2b" stroke="#000" stroke-width="0.9" stroke-linejoin="round" />
<rect x="372" y="328.5" width="2.2" height="25" fill="#9a9a9a" stroke="#000" stroke-width=".5"/>
<circle cx="362.0" cy="330.5" r="1.4" fill="#9a9a9a" stroke="#000" stroke-width=".3"/>
<circle cx="367.5" cy="331.7" r="1.4" fill="#9a9a9a" stroke="#000" stroke-width=".3"/>
<circle cx="362.0" cy="337.0" r="1.4" fill="#9a9a9a" stroke="#000" stroke-width=".3"/>
<circle cx="367.5" cy="338.2" r="1.4" fill="#9a9a9a" stroke="#000" stroke-width=".3"/>
<circle cx="362.0" cy="343.5" r="1.4" fill="#9a9a9a" stroke="#000" stroke-width=".3"/>
<circle cx="367.5" cy="344.7" r="1.4" fill="#9a9a9a" stroke="#000" stroke-width=".3"/>
<path d="M396,395.5 L396,400.0 A16,5 0 0 0 428,400.0 L428,395.5 Z" fill="url(#disc)" stroke="#000" stroke-width="0.8"/>
<ellipse cx="412" cy="395.5" rx="16" ry="5" fill="#8d8d8d" stroke="#000" stroke-width="0.8"/>
<rect x="408" y="390.5" width="8" height="5" fill="url(#disc)" stroke="#000" stroke-width="0.6"/>
<path d="M396,385 L396,389.5 A16,5 0 0 0 428,389.5 L428,385 Z" fill="url(#disc)" stroke="#000" stroke-width="0.8"/>
<ellipse cx="412" cy="385" rx="16" ry="5" fill="#8d8d8d" stroke="#000" stroke-width="0.8"/>
<rect x="408" y="380" width="8" height="5" fill="url(#disc)" stroke="#000" stroke-width="0.6"/>
<rect x="415" y="366" width="10" height="17" fill="#8a8a8a" stroke="#000" stroke-width="0.8"/>
<polygon points="403.0,365.0 416.0,367.0 416.0,382.0 403.0,381.0" fill="#2b2b2b" stroke="#000" stroke-width="0.8" stroke-linejoin="round" />
<polygon points="397.0,336.0 411.0,340.0 411.0,365.0 397.0,361.0" fill="#2b2b2b" stroke="#000" stroke-width="0.9" stroke-linejoin="round" />
<rect x="411" y="340" width="2.2" height="25" fill="#9a9a9a" stroke="#000" stroke-width=".5"/>
<circle cx="401.0" cy="342.0" r="1.4" fill="#9a9a9a" stroke="#000" stroke-width=".3"/>
<circle cx="406.5" cy="343.2" r="1.4" fill="#9a9a9a" stroke="#000" stroke-width=".3"/>
<circle cx="401.0" cy="348.5" r="1.4" fill="#9a9a9a" stroke="#000" stroke-width=".3"/>
<circle cx="406.5" cy="349.7" r="1.4" fill="#9a9a9a" stroke="#000" stroke-width=".3"/>
<circle cx="401.0" cy="355.0" r="1.4" fill="#9a9a9a" stroke="#000" stroke-width=".3"/>
<circle cx="406.5" cy="356.2" r="1.4" fill="#9a9a9a" stroke="#000" stroke-width=".3"/>
<path d="M435,407.2 L435,411.7 A16,5 0 0 0 467,411.7 L467,407.2 Z" fill="url(#disc)" stroke="#000" stroke-width="0.8"/>
<ellipse cx="451" cy="407.2" rx="16" ry="5" fill="#8d8d8d" stroke="#000" stroke-width="0.8"/>
<rect x="447" y="402.2" width="8" height="5" fill="url(#disc)" stroke="#000" stroke-width="0.6"/>
<path d="M435,396.7 L435,401.2 A16,5 0 0 0 467,401.2 L467,396.7 Z" fill="url(#disc)" stroke="#000" stroke-width="0.8"/>
<ellipse cx="451" cy="396.7" rx="16" ry="5" fill="#8d8d8d" stroke="#000" stroke-width="0.8"/>
<rect x="447" y="391.7" width="8" height="5" fill="url(#disc)" stroke="#000" stroke-width="0.6"/>
<rect x="454" y="377.7" width="10" height="17" fill="#8a8a8a" stroke="#000" stroke-width="0.8"/>
<polygon points="442.0,376.7 455.0,378.7 455.0,393.7 442.0,392.7" fill="#2b2b2b" stroke="#000" stroke-width="0.8" stroke-linejoin="round" />
<polygon points="436.0,347.7 450.0,351.7 450.0,376.7 436.0,372.7" fill="#2b2b2b" stroke="#000" stroke-width="0.9" stroke-linejoin="round" />
<rect x="450" y="351.7" width="2.2" height="25" fill="#9a9a9a" stroke="#000" stroke-width=".5"/>
<circle cx="440.0" cy="353.7" r="1.4" fill="#9a9a9a" stroke="#000" stroke-width=".3"/>
<circle cx="445.5" cy="354.9" r="1.4" fill="#9a9a9a" stroke="#000" stroke-width=".3"/>
<circle cx="440.0" cy="360.2" r="1.4" fill="#9a9a9a" stroke="#000" stroke-width=".3"/>
<circle cx="445.5" cy="361.4" r="1.4" fill="#9a9a9a" stroke="#000" stroke-width=".3"/>
<circle cx="440.0" cy="366.7" r="1.4" fill="#9a9a9a" stroke="#000" stroke-width=".3"/>
<circle cx="445.5" cy="367.9" r="1.4" fill="#9a9a9a" stroke="#000" stroke-width=".3"/>
<path d="M475.6,418.5 L475.6,423.0 A16,5 0 0 0 507.6,423.0 L507.6,418.5 Z" fill="url(#disc)" stroke="#000" stroke-width="0.8"/>
<ellipse cx="491.6" cy="418.5" rx="16" ry="5" fill="#8d8d8d" stroke="#000" stroke-width="0.8"/>
<rect x="487.6" y="413.5" width="8" height="5" fill="url(#disc)" stroke="#000" stroke-width="0.6"/>
<path d="M475.6,408 L475.6,412.5 A16,5 0 0 0 507.6,412.5 L507.6,408 Z" fill="url(#disc)" stroke="#000" stroke-width="0.8"/>
<ellipse cx="491.6" cy="408" rx="16" ry="5" fill="#8d8d8d" stroke="#000" stroke-width="0.8"/>
<rect x="487.6" y="403" width="8" height="5" fill="url(#disc)" stroke="#000" stroke-width="0.6"/>
<rect x="494.6" y="389" width="10" height="17" fill="#8a8a8a" stroke="#000" stroke-width="0.8"/>
<polygon points="482.6,388.0 495.6,390.0 495.6,405.0 482.6,404.0" fill="#2b2b2b" stroke="#000" stroke-width="0.8" stroke-linejoin="round" />
<polygon points="476.6,359.0 490.6,363.0 490.6,388.0 476.6,384.0" fill="#2b2b2b" stroke="#000" stroke-width="0.9" stroke-linejoin="round" />
<rect x="490.6" y="363" width="2.2" height="25" fill="#9a9a9a" stroke="#000" stroke-width=".5"/>
<circle cx="480.6" cy="365.0" r="1.4" fill="#9a9a9a" stroke="#000" stroke-width=".3"/>
<circle cx="486.1" cy="366.2" r="1.4" fill="#9a9a9a" stroke="#000" stroke-width=".3"/>
<circle cx="480.6" cy="371.5" r="1.4" fill="#9a9a9a" stroke="#000" stroke-width=".3"/>
<circle cx="486.1" cy="372.7" r="1.4" fill="#9a9a9a" stroke="#000" stroke-width=".3"/>
<circle cx="480.6" cy="378.0" r="1.4" fill="#9a9a9a" stroke="#000" stroke-width=".3"/>
<circle cx="486.1" cy="379.2" r="1.4" fill="#9a9a9a" stroke="#000" stroke-width=".3"/>
<path d="M502,319 L506,319 L510,338 L498,338 Z" fill="url(#cone)" stroke="#000" stroke-width="0.8"/>
<rect x="498.5" y="349" width="11" height="9" fill="url(#cone)" stroke="#000" stroke-width="0.7"/>
<path d="M499,338 L509,338 L520.5,347 Q520.5,351 504,352 Q487.5,351 487.5,347 Z" fill="url(#cone)" stroke="#000" stroke-width="0.8"/>
<rect x="498.5" y="369" width="11" height="9" fill="url(#cone)" stroke="#000" stroke-width="0.7"/>
<path d="M499,358 L509,358 L521.5,367 Q521.5,371 504,372 Q486.5,371 486.5,367 Z" fill="url(#cone)" stroke="#000" stroke-width="0.8"/>
<rect x="498.5" y="384" width="11" height="9" fill="url(#cone)" stroke="#000" stroke-width="0.7"/>
<path d="M499,378 L509,378 L519.5,382 Q519.5,386 504,387 Q488.5,386 488.5,382 Z" fill="url(#cone)" stroke="#000" stroke-width="0.8"/>
<rect x="498" y="386" width="12" height="7" fill="url(#cone)" stroke="#000" stroke-width="0.7"/>
<path d="M542,330 L546,330 L550,349 L538,349 Z" fill="url(#cone)" stroke="#000" stroke-width="0.8"/>
<rect x="538.5" y="360" width="11" height="9" fill="url(#cone)" stroke="#000" stroke-width="0.7"/>
<path d="M539,349 L549,349 L560.5,358 Q560.5,362 544,363 Q527.5,362 527.5,358 Z" fill="url(#cone)" stroke="#000" stroke-width="0.8"/>
<rect x="538.5" y="380" width="11" height="9" fill="url(#cone)" stroke="#000" stroke-width="0.7"/>
<path d="M539,369 L549,369 L561.5,378 Q561.5,382 544,383 Q526.5,382 526.5,378 Z" fill="url(#cone)" stroke="#000" stroke-width="0.8"/>
<rect x="538.5" y="395" width="11" height="9" fill="url(#cone)" stroke="#000" stroke-width="0.7"/>
<path d="M539,389 L549,389 L559.5,393 Q559.5,397 544,398 Q528.5,397 528.5,393 Z" fill="url(#cone)" stroke="#000" stroke-width="0.8"/>
<rect x="538" y="397" width="12" height="7" fill="url(#cone)" stroke="#000" stroke-width="0.7"/>
<path d="M582,341 L586,341 L590,360 L578,360 Z" fill="url(#cone)" stroke="#000" stroke-width="0.8"/>
<rect x="578.5" y="371" width="11" height="9" fill="url(#cone)" stroke="#000" stroke-width="0.7"/>
<path d="M579,360 L589,360 L600.5,369 Q600.5,373 584,374 Q567.5,373 567.5,369 Z" fill="url(#cone)" stroke="#000" stroke-width="0.8"/>
<rect x="578.5" y="391" width="11" height="9" fill="url(#cone)" stroke="#000" stroke-width="0.7"/>
<path d="M579,380 L589,380 L601.5,389 Q601.5,393 584,394 Q566.5,393 566.5,389 Z" fill="url(#cone)" stroke="#000" stroke-width="0.8"/>
<rect x="578.5" y="406" width="11" height="9" fill="url(#cone)" stroke="#000" stroke-width="0.7"/>
<path d="M579,400 L589,400 L599.5,404 Q599.5,408 584,409 Q568.5,408 568.5,404 Z" fill="url(#cone)" stroke="#000" stroke-width="0.8"/>
<rect x="578" y="408" width="12" height="7" fill="url(#cone)" stroke="#000" stroke-width="0.7"/>
<path d="M504,319 C506,300 520,285 545,268 C570,252 580,230 590,208 C598,192 610,187 629,188" fill="none" stroke="#000" stroke-width="4.6" stroke-linecap="butt"/>
<path d="M504,319 C506,300 520,285 545,268 C570,252 580,230 590,208 C598,192 610,187 629,188" fill="none" stroke="#8e8e8e" stroke-width="2.6"/>
<path d="M544,330 C546,311 560,296 585,279 C610,263 620,241 630,219 C638,203 650,199 669,200" fill="none" stroke="#000" stroke-width="4.6" stroke-linecap="butt"/>
<path d="M544,330 C546,311 560,296 585,279 C610,263 620,241 630,219 C638,203 650,199 669,200" fill="none" stroke="#8e8e8e" stroke-width="2.6"/>
<path d="M584,341 C586,322 600,307 625,290 C650,274 660,252 670,230 C678,214 690,211 709,212" fill="none" stroke="#000" stroke-width="4.6" stroke-linecap="butt"/>
<path d="M584,341 C586,322 600,307 625,290 C650,274 660,252 670,230 C678,214 690,211 709,212" fill="none" stroke="#8e8e8e" stroke-width="2.6"/>
<rect x="614" y="452" width="1.2" height="95" fill="#000"/>
<rect x="628.5" y="449" width="4" height="98" fill="#2a2a2a"/>
<rect x="636" y="452" width="1.2" height="95" fill="#000"/>
<rect x="668" y="444" width="3" height="100" fill="#2a2a2a"/>
<rect x="674" y="444" width="1.2" height="100" fill="#000"/>
<line x1="637.0" y1="458.0" x2="668.0" y2="452.0" stroke="#000" stroke-width="1"/>
<line x1="637.0" y1="512.0" x2="668.0" y2="506.0" stroke="#000" stroke-width="1"/>
<polygon points="604.8,443.5 648,438.4 676,446 630.4,451.6" fill="none" stroke="#2a2a2a" stroke-width="1.6"/>
<polygon points="604.8,443.5 630.4,451.6 630.4,456.5 604.8,448.5" fill="#2a2a2a" stroke="#000" stroke-width="0.6"/>
<polygon points="630.4,451.6 676,446 676,450 630.4,456" fill="none" stroke="#2a2a2a" stroke-width="1.2"/>
<polygon points="612,444 648,440 668,446 632,450" fill="none" stroke="#2a2a2a" stroke-width="1"/>
<polygon points="604.8,497.0 648,491.9 676,499.5 630.4,505.1" fill="none" stroke="#2a2a2a" stroke-width="1.6"/>
<polygon points="604.8,497.0 630.4,505.1 630.4,510.0 604.8,502.0" fill="#2a2a2a" stroke="#000" stroke-width="0.6"/>
<polygon points="630.4,505.1 676,499.5 676,503.5 630.4,509.5" fill="none" stroke="#2a2a2a" stroke-width="1.2"/>
<polygon points="612,497.5 648,493.5 668,499.5 632,503.5" fill="none" stroke="#2a2a2a" stroke-width="1"/>
<polygon points="74.0,483.0 106.0,480.0 193.0,468.0 193.0,759.0 106.0,736.0 74.0,725.0" fill="#2b2b2b" stroke="#000" stroke-width="1" stroke-linejoin="round" />
<polygon points="193.0,507.0 281.0,495.0 281.0,788.0 193.0,762.0" fill="#2b2b2b" stroke="#000" stroke-width="1" stroke-linejoin="round" />
<polygon points="281.0,532.0 418.0,515.0 425.0,546.7 425.0,787.0 336.0,800.0 281.0,788.0" fill="#2b2b2b" stroke="#000" stroke-width="1" stroke-linejoin="round" />
<polygon points="74.0,483.0 106.0,500.0 185.0,513.0 193.0,507.0 193.0,480.0 110.0,470.0" fill="url(#mesh)" stroke="#000" stroke-width="0.5" stroke-linejoin="round" />
<polygon points="206.0,522.0 272.0,537.0 281.0,532.0 281.0,505.0 210.0,500.0" fill="url(#mesh)" stroke="#000" stroke-width="0.5" stroke-linejoin="round" />
<rect x="118" y="488" width="9.5" height="252" fill="#858585" stroke="#000" stroke-width="0.6"/>
<rect x="206.3" y="513" width="9.3" height="253" fill="#858585" stroke="#000" stroke-width="0.6"/>
<rect x="294.5" y="538" width="9.3" height="254" fill="#858585" stroke="#000" stroke-width="0.6"/>
<rect x="160" y="475" width="2" height="276" fill="#808080" stroke="#000" stroke-width="0.4"/>
<rect x="248.5" y="500" width="2" height="277" fill="#808080" stroke="#000" stroke-width="0.4"/>
<line x1="106.0" y1="500.0" x2="106.0" y2="736.0" stroke="#000" stroke-width="1"/>
<line x1="194.0" y1="526.0" x2="194.0" y2="762.0" stroke="#000" stroke-width="1"/>
<line x1="282.0" y1="551.0" x2="282.0" y2="788.0" stroke="#000" stroke-width="1"/>
<rect x="335.4" y="557.7" width="3.2" height="242.2" fill="#8a8a8a" stroke="#000" stroke-width="0.6"/>
<rect x="345.9" y="556.5" width="3.2" height="241.8" fill="#8a8a8a" stroke="#000" stroke-width="0.6"/>
<rect x="354.9" y="555.4" width="3.2" height="241.6" fill="#8a8a8a" stroke="#000" stroke-width="0.6"/>
<rect x="363.9" y="554.3" width="3.2" height="241.3" fill="#8a8a8a" stroke="#000" stroke-width="0.6"/>
<rect x="374.5" y="553.0" width="3.2" height="241.0" fill="#8a8a8a" stroke="#000" stroke-width="0.6"/>
<rect x="383.5" y="551.9" width="3.2" height="240.7" fill="#8a8a8a" stroke="#000" stroke-width="0.6"/>
<rect x="392.5" y="550.9" width="3.2" height="240.4" fill="#8a8a8a" stroke="#000" stroke-width="0.6"/>
<rect x="401.5" y="549.8" width="3.2" height="240.2" fill="#8a8a8a" stroke="#000" stroke-width="0.6"/>
<rect x="410.5" y="548.7" width="3.2" height="239.9" fill="#8a8a8a" stroke="#000" stroke-width="0.6"/>
<rect x="421.1" y="547.4" width="3.2" height="239.6" fill="#8a8a8a" stroke="#000" stroke-width="0.6"/>
<polygon points="303.0,547.0 339.0,558.6 425.0,546.7 390.0,535.5" fill="url(#mesh)" stroke="#000" stroke-width="0.5" stroke-linejoin="round" />
<polygon points="111.0,466.7 238.0,450.7 247.0,467.8 119.0,485.7" fill="#a2a2a2" stroke="#000" stroke-width="0.8" stroke-linejoin="round" />
<polygon points="119.0,485.7 247.0,467.8 240.0,481.0 111.0,500.0" fill="#2d2d2d" stroke="#000" stroke-width="0.8" stroke-linejoin="round" />
<path d="M93.7,480 A12,17 0 0 1 117.7,480 Q115.9,492.1 105.7,502 Q95.5,492.1 93.7,480 Z" fill="#2d2d2d" stroke="#000" stroke-width="1"/>
<polygon points="200.0,488.6 326.0,475.6 335.0,493.0 206.0,509.6" fill="#a2a2a2" stroke="#000" stroke-width="0.8" stroke-linejoin="round" />
<polygon points="206.0,509.6 335.0,493.0 329.0,503.0 200.0,523.0" fill="#2d2d2d" stroke="#000" stroke-width="0.8" stroke-linejoin="round" />
<path d="M180.5,506.6 A12,17 0 0 1 204.5,506.6 Q202.7,518.7 192.5,528.6 Q182.3,518.7 180.5,506.6 Z" fill="#2d2d2d" stroke="#000" stroke-width="1"/>
<polygon points="288.8,515.6 415.0,500.6 424.0,517.0 293.3,535.0" fill="#a2a2a2" stroke="#000" stroke-width="0.8" stroke-linejoin="round" />
<polygon points="293.3,535.0 424.0,517.0 418.0,527.0 288.0,549.0" fill="#2d2d2d" stroke="#000" stroke-width="0.8" stroke-linejoin="round" />
<path d="M269.2,532 A12,17 0 0 1 293.2,532 Q291.4,544.1 281.2,554 Q271.0,544.1 269.2,532 Z" fill="#2d2d2d" stroke="#000" stroke-width="1"/>
<polygon points="106.0,738.0 121.0,740.0 162.0,751.0 118.0,757.0" fill="#a2a2a2" stroke="#000" stroke-width="0.8" stroke-linejoin="round" />
<polygon points="118.0,757.0 162.0,751.0 193.0,759.0 190.0,761.5 118.0,770.0" fill="#2d2d2d" stroke="#000" stroke-width="0.8" stroke-linejoin="round" />
<path d="M92.7,757.5 A12,19 0 0 0 116.7,757.5 Q114.9,746.5 104.7,737.5 Q94.5,746.5 92.7,757.5 Z" fill="#2d2d2d" stroke="#000" stroke-width="1"/>
<polygon points="197.0,766.0 210.0,765.5 252.0,776.0 206.0,783.0" fill="#a2a2a2" stroke="#000" stroke-width="0.8" stroke-linejoin="round" />
<polygon points="206.0,783.0 252.0,776.0 281.0,785.0 206.0,795.0" fill="#2d2d2d" stroke="#000" stroke-width="0.8" stroke-linejoin="round" />
<path d="M181.5,782 A12,19 0 0 0 205.5,782 Q203.7,771.55 193.5,763 Q183.3,771.55 181.5,782 Z" fill="#2d2d2d" stroke="#000" stroke-width="1"/>
<polygon points="286.0,792.0 300.0,792.0 336.0,800.0 421.0,789.0 422.0,791.0 300.0,812.0" fill="#a2a2a2" stroke="#000" stroke-width="0.8" stroke-linejoin="round" />
<polygon points="300.0,812.0 421.0,791.0 415.0,800.0 292.0,820.0" fill="#2d2d2d" stroke="#000" stroke-width="0.8" stroke-linejoin="round" />
<path d="M270,808 A12,18 0 0 0 294,808 Q292.2,797.0 282,788 Q271.8,797.0 270,808 Z" fill="#2d2d2d" stroke="#000" stroke-width="1"/>
<polygon points="494.4,544.6 678.0,545.7 678.0,786.7 626.0,795.6 555.7,803.4 494.5,786.7" fill="#878787" stroke="#000" stroke-width="1" stroke-linejoin="round" />
<polygon points="494.4,544.6 530.0,533.0 610.0,530.0 678.0,534.0 678.0,545.7 556.0,556.0" fill="url(#mesh)" stroke="#000" stroke-width="0.6" stroke-linejoin="round" />
<rect x="494.0" y="545.0" width="2.7" height="241.7" fill="#222"/>
<rect x="500.6" y="546.2" width="2.7" height="242.3" fill="#222"/>
<rect x="506.8" y="547.3" width="2.7" height="242.9" fill="#222"/>
<rect x="513.5" y="548.5" width="2.7" height="243.5" fill="#222"/>
<rect x="519.5" y="549.6" width="2.7" height="244.0" fill="#222"/>
<rect x="526.2" y="550.8" width="2.7" height="244.6" fill="#222"/>
<rect x="532.4" y="551.9" width="2.7" height="245.2" fill="#222"/>
<rect x="539.0" y="553.1" width="2.7" height="245.8" fill="#222"/>
<rect x="545.0" y="554.2" width="2.7" height="246.3" fill="#222"/>
<rect x="551.0" y="555.3" width="2.7" height="246.8" fill="#222"/>
<line x1="556.3" y1="556.0" x2="556.3" y2="803.4" stroke="#000" stroke-width="1"/>
<rect x="603" y="552" width="6.7" height="246" fill="#2a2a2a"/>
<line x1="625.3" y1="560.0" x2="625.3" y2="795.6" stroke="#000" stroke-width="1"/>
<line x1="678.0" y1="545.7" x2="678.0" y2="786.7" stroke="#000" stroke-width="1"/>
<polygon points="517.3,519.0 529.5,501.0 614.0,523.4 600.0,545.0" fill="url(#dots)" stroke="#000" stroke-width="0.8" stroke-linejoin="round" />
<polygon points="517.3,519.0 600.0,545.0 613.0,556.0 531.8,533.4" fill="#2d2d2d" stroke="#000" stroke-width="0.8" stroke-linejoin="round" />
<path d="M607,537.9 A16,16 0 0 1 639,537.9 Q637,550 623,561.3 Q609,550 607,537.9 Z" fill="#8a8a8a" stroke="#000" stroke-width="1"/>
<polygon points="555.7,803.4 622.5,797.9 606.0,815.7" fill="url(#dots)" stroke="#000" stroke-width="0.8" stroke-linejoin="round" />
<polygon points="522.3,794.5 555.7,803.4 606.0,815.7 606.0,824.6 531.2,803.4" fill="#2d2d2d" stroke="#000" stroke-width="0.8" stroke-linejoin="round" />
<path d="M605.8,819 A17,17 0 0 0 640.4,819 Q638,806 622.5,796.7 Q607,806 605.8,819 Z" fill="#8a8a8a" stroke="#000" stroke-width="1"/></svg>
<!-- status bar -->
<div class="abs" style="left:31px;top:936px;width:867px;height:17px;background:#ebebeb"></div>
<div class="abs" style="left:56px;top:938px;font-size:12px;line-height:14px;color:#1a1a3a">1 : 96</div>
<svg class="abs" style="left:100px;top:934px" width="180" height="20"><g transform="translate(10,3)"><rect x="0.5" y="0.5" width="15" height="12" fill="#fff" stroke="#222" stroke-width="1.2"/><rect x="2" y="3" width="4" height="3" fill="#333"/><rect x="10" y="3" width="4" height="3" fill="#333"/><rect x="6" y="6" width="4" height="3" fill="#555"/><rect x="2" y="9" width="12" height="2" fill="#444"/></g>
<g transform="translate(32,3)"><path d="M0.5,5 L4,1 L15,1 L15,9 L11.5,13 L0.5,13 Z" fill="#a9cdea" stroke="#3a7cc2" stroke-width="1.2"/><path d="M0.5,5 L11.5,5 L15,1 M11.5,5 L11.5,13" fill="none" stroke="#3a7cc2" stroke-width="1"/></g>
<g transform="translate(51,3)"><path d="M3,4 L3,12 M1,8 L3,8 M3,4 L12,4 M12,4 L12,2" fill="none" stroke="#3a7cc2" stroke-width="1.6"/><path d="M7,6 L15,13 M15,6 L7,13" stroke="#d2452b" stroke-width="2"/></g>
<g transform="translate(72,3)"><path d="M3,4 L3,12 M1,8 L3,8 M3,4 L11,4" fill="none" stroke="#3a7cc2" stroke-width="1.6"/><circle cx="13" cy="8" r="3" fill="#fff" stroke="#3a7cc2" stroke-width="1.3"/><path d="M6,7 L9,7 M6,10 L9,10" stroke="#333" stroke-width="1"/></g>
<g transform="translate(93,3)"><path d="M1,7 L7,1 L13,6 L13,13 L1,13 Z" fill="#fff" stroke="#333" stroke-width="1.2"/><path d="M4,13 L4,9 L7,9 L7,13" fill="none" stroke="#333"/><rect x="9" y="8" width="6" height="5" fill="#3a7cc2"/></g>
<g transform="translate(114,3)"><path d="M1,6 Q4,12 8,7 Q10,4 12,7 Q14,11 16,5" fill="none" stroke="#333" stroke-width="1.4"/><circle cx="12" cy="8" r="3" fill="none" stroke="#333" stroke-width="1.2"/></g>
<g transform="translate(134,3)"><path d="M1,1 L1,13 M16,1 L16,6 M1,3 L16,3" fill="none" stroke="#333" stroke-width="1.3"/><path d="M1,9 L8,9" stroke="#333" stroke-dasharray="2,1"/><rect x="10" y="8" width="6" height="5" fill="#444"/></g>
<g transform="translate(155,3)"><rect x="0.5" y="1" width="13" height="8" fill="#fff" stroke="#333" stroke-width="1.2"/><path d="M1,12 L13,12" stroke="#333" stroke-width="1.4"/><circle cx="14" cy="8" r="3" fill="#fff" stroke="#3a7cc2" stroke-width="1.3"/></g></svg>
<div class="abs" style="left:0;top:955px;width:898px;height:10px;background:#cbcbcb"></div>
<div class="abs" style="left:0;top:960px;font-size:12.5px;line-height:14px;color:#222;white-space:nowrap">Pl&nbsp;&nbsp;ck&nbsp;&nbsp;t&nbsp;&nbsp;SHIFT&nbsp;&nbsp;&nbsp;&nbsp;select</div>
</body></html>
